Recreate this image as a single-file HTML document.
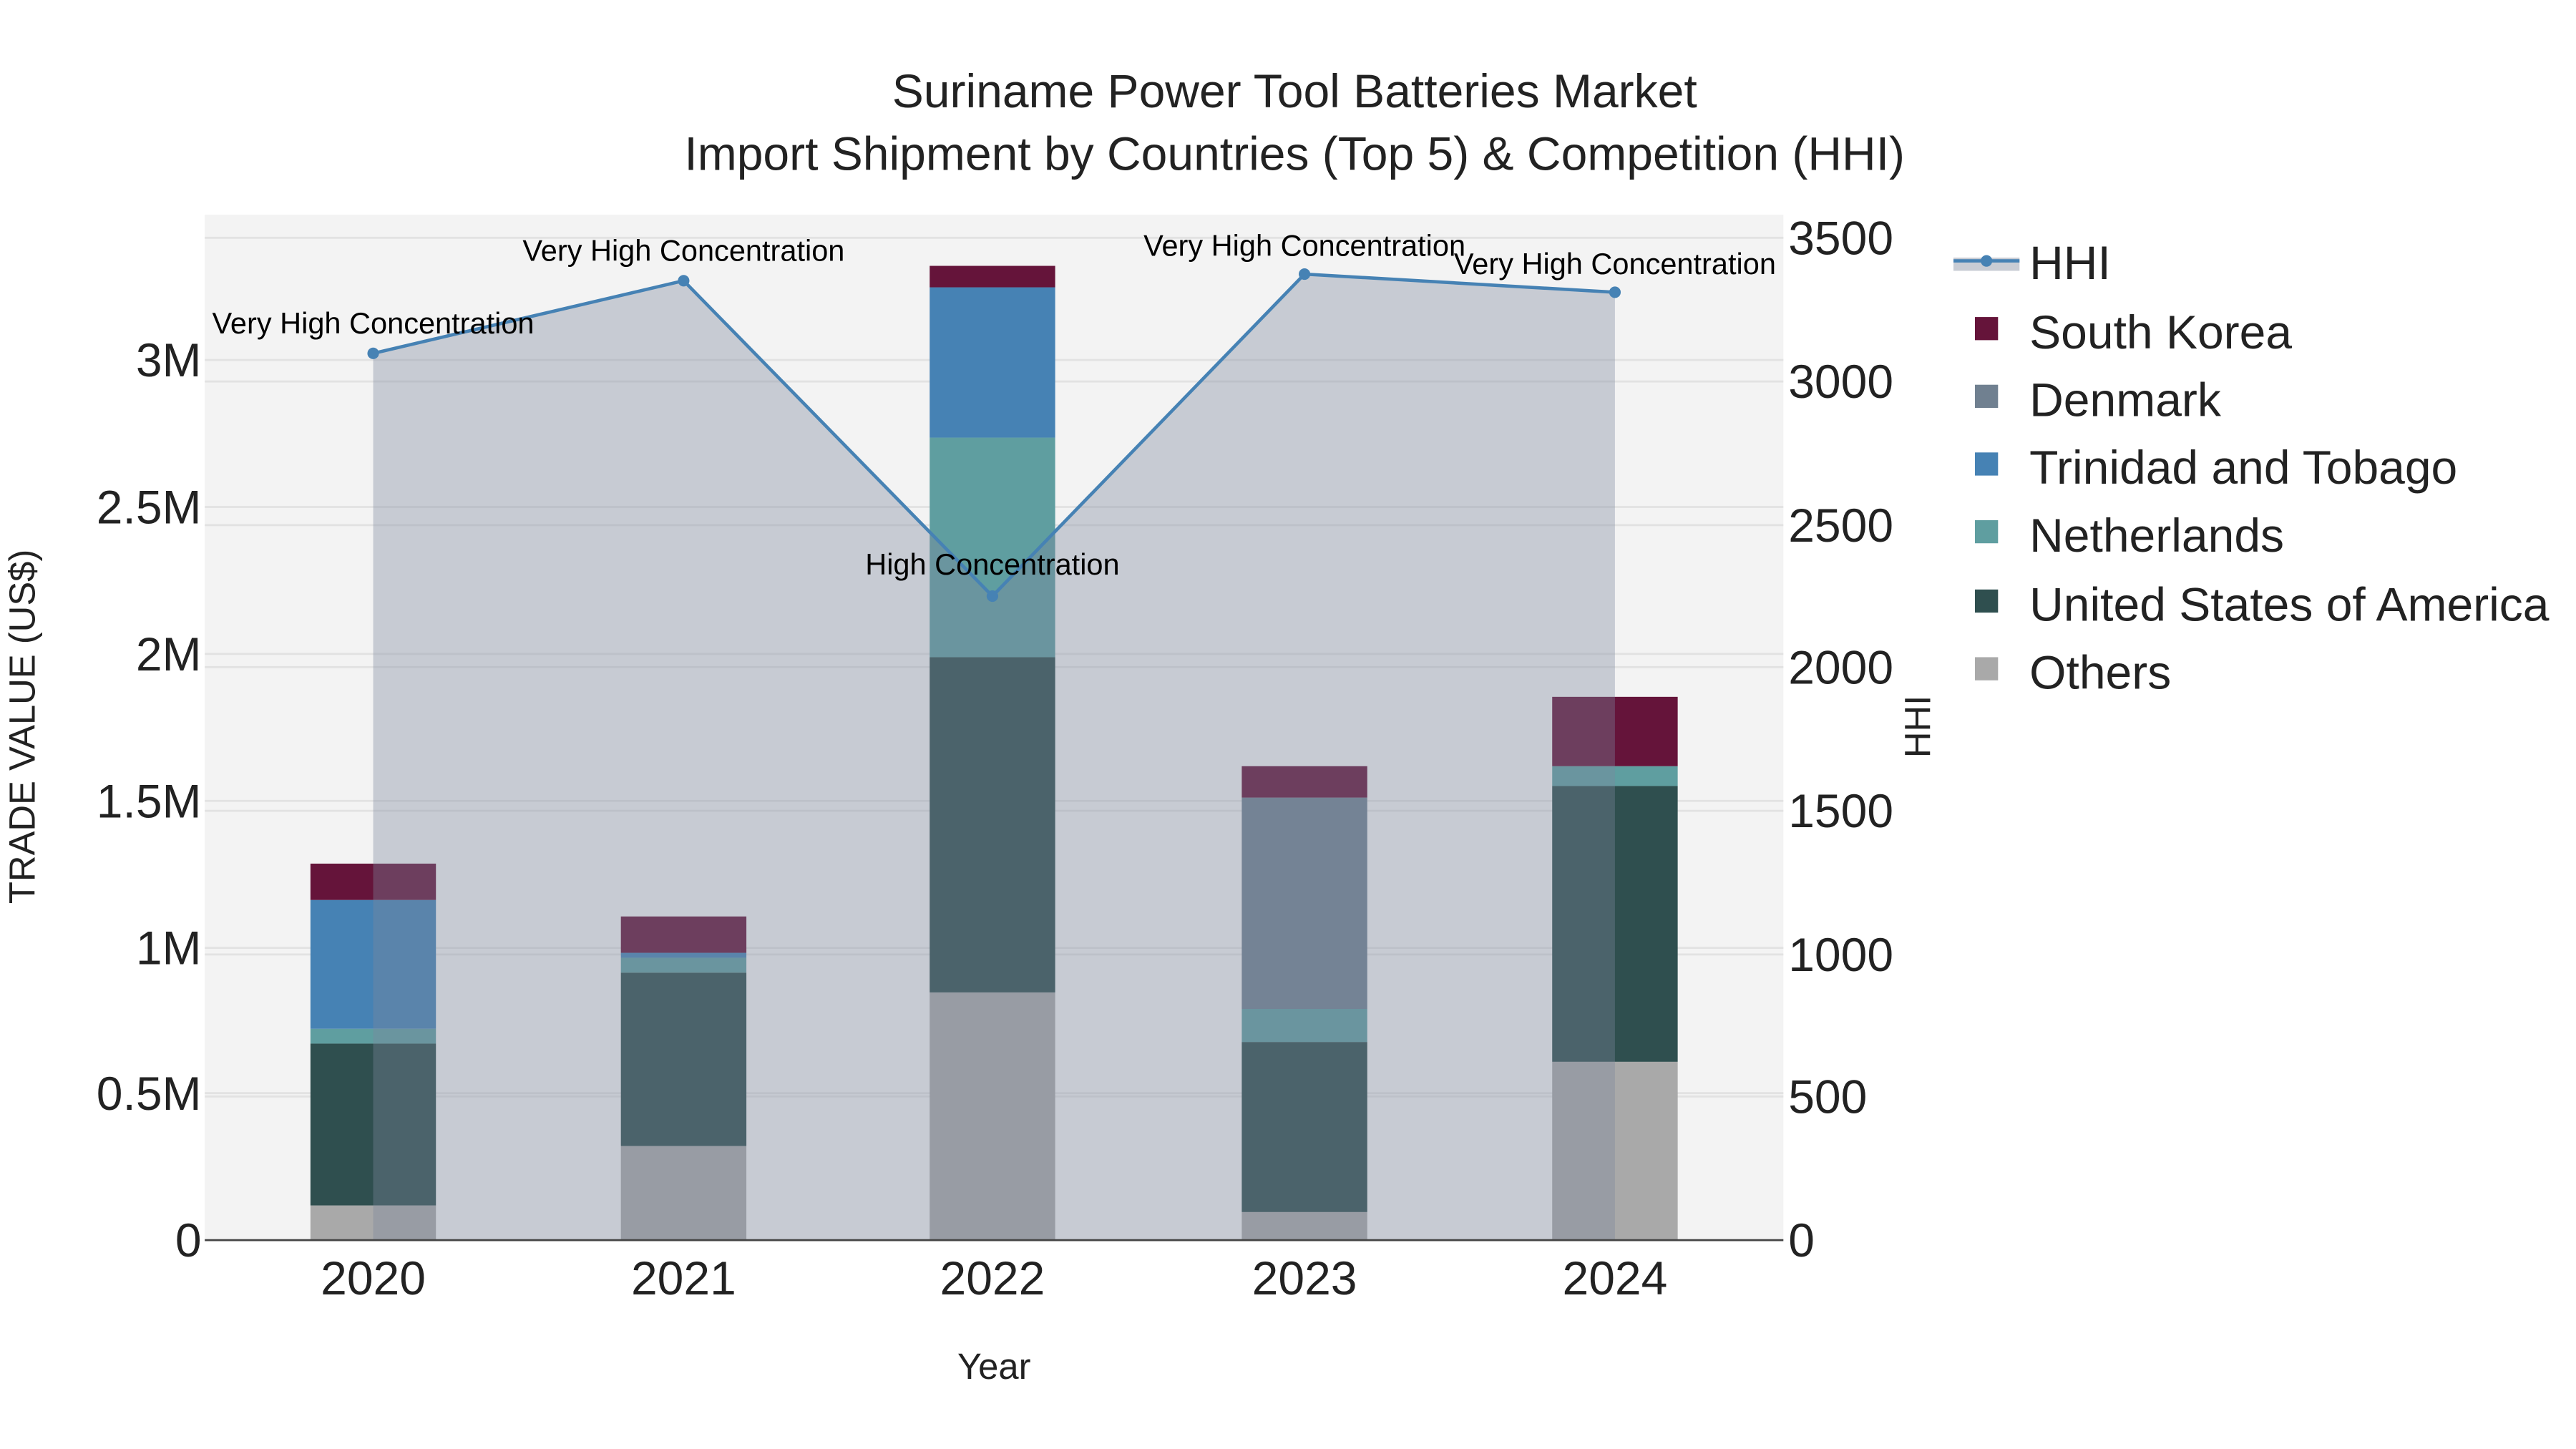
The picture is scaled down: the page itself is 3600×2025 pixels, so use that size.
<!DOCTYPE html>
<html><head><meta charset="utf-8"><style>html,body{margin:0;padding:0;background:#fff}svg{display:block}</style></head>
<body>
<svg width="3600" height="2025" viewBox="0 0 1560 877.5" xmlns="http://www.w3.org/2000/svg" font-family="Liberation Sans, sans-serif">
<rect x="0" y="0" width="1560" height="877.5" fill="#fff"/>
<rect x="124" y="130" width="956" height="621" fill="#f3f3f3"/>
<g stroke="#e2e2e2" stroke-width="1.2">
<line x1="124" x2="1080" y1="662" y2="662"/><line x1="124" x2="1080" y1="574" y2="574"/><line x1="124" x2="1080" y1="485" y2="485"/><line x1="124" x2="1080" y1="396" y2="396"/><line x1="124" x2="1080" y1="307" y2="307"/><line x1="124" x2="1080" y1="218" y2="218"/>
<line x1="124" x2="1080" y1="664" y2="664"/><line x1="124" x2="1080" y1="578" y2="578"/><line x1="124" x2="1080" y1="491" y2="491"/><line x1="124" x2="1080" y1="404" y2="404"/><line x1="124" x2="1080" y1="318" y2="318"/><line x1="124" x2="1080" y1="231" y2="231"/><line x1="124" x2="1080" y1="144" y2="144"/>
</g>
<g>
<rect x="188" y="730" width="76" height="21" fill="#a9a9a9"/><rect x="188" y="632" width="76" height="98" fill="#2f4f4f"/><rect x="188" y="623" width="76" height="9" fill="#5f9ea0"/><rect x="188" y="545" width="76" height="78" fill="#4682b4"/><rect x="188" y="523" width="76" height="22" fill="#65143a"/>
<rect x="376" y="694" width="76" height="57" fill="#a9a9a9"/><rect x="376" y="589" width="76" height="105" fill="#2f4f4f"/><rect x="376" y="580" width="76" height="9" fill="#5f9ea0"/><rect x="376" y="577" width="76" height="3" fill="#4682b4"/><rect x="376" y="555" width="76" height="22" fill="#65143a"/>
<rect x="563" y="601" width="76" height="150" fill="#a9a9a9"/><rect x="563" y="398" width="76" height="203" fill="#2f4f4f"/><rect x="563" y="265" width="76" height="133" fill="#5f9ea0"/><rect x="563" y="174" width="76" height="91" fill="#4682b4"/><rect x="563" y="161" width="76" height="13" fill="#65143a"/>
<rect x="752" y="734" width="76" height="17" fill="#a9a9a9"/><rect x="752" y="631" width="76" height="103" fill="#2f4f4f"/><rect x="752" y="611" width="76" height="20" fill="#5f9ea0"/><rect x="752" y="483" width="76" height="128" fill="#708090"/><rect x="752" y="464" width="76" height="19" fill="#65143a"/>
<rect x="940" y="643" width="76" height="108" fill="#a9a9a9"/><rect x="940" y="476" width="76" height="167" fill="#2f4f4f"/><rect x="940" y="464" width="76" height="12" fill="#5f9ea0"/><rect x="940" y="422" width="76" height="42" fill="#65143a"/>
</g>
<polygon points="226,751 226,214 414,170 601,361 790,166 978,177 978,751" fill="rgb(125,136,158)" fill-opacity="0.37"/>
<polyline points="226,214 414,170 601,361 790,166 978,177" fill="none" stroke="#4682b4" stroke-width="2"/>
<g fill="#4682b4"><circle cx="226" cy="214" r="3.5"/><circle cx="414" cy="170" r="3.5"/><circle cx="601" cy="361" r="3.5"/><circle cx="790" cy="166" r="3.5"/><circle cx="978" cy="177" r="3.5"/></g>
<line x1="124" x2="1080" y1="751" y2="751" stroke="#444" stroke-width="1.2"/>
<g font-size="18" fill="#000" text-anchor="middle">
<text x="226" y="202">Very High Concentration</text><text x="414" y="158">Very High Concentration</text><text x="790" y="155">Very High Concentration</text><text x="978" y="166">Very High Concentration</text><text x="601" y="348">High Concentration</text>
</g>
<g font-size="28.6" fill="#222" text-anchor="middle">
<text x="784" y="65">Suriname Power Tool Batteries Market</text>
<text x="784" y="103">Import Shipment by Countries (Top 5) &amp; Competition (HHI)</text>
</g>
<g font-size="28.6" fill="#222" text-anchor="end">
<text x="122" y="761">0</text><text x="122" y="672">0.5M</text><text x="122" y="584">1M</text><text x="122" y="495">1.5M</text><text x="122" y="406">2M</text><text x="122" y="317">2.5M</text><text x="122" y="228">3M</text>
</g>
<g font-size="28.6" fill="#222" text-anchor="start">
<text x="1083" y="761">0</text><text x="1083" y="674">500</text><text x="1083" y="588">1000</text><text x="1083" y="501">1500</text><text x="1083" y="414">2000</text><text x="1083" y="328">2500</text><text x="1083" y="241">3000</text><text x="1083" y="154">3500</text>
</g>
<g font-size="28.6" fill="#222" text-anchor="middle">
<text x="226" y="784">2020</text><text x="414" y="784">2021</text><text x="601" y="784">2022</text><text x="790" y="784">2023</text><text x="978" y="784">2024</text>
</g>
<text x="602" y="835" font-size="22" fill="#222" text-anchor="middle">Year</text>
<text transform="translate(21,440) rotate(-90)" font-size="22" fill="#222" text-anchor="middle">TRADE VALUE (US$)</text>
<text transform="translate(1169,440) rotate(-90)" font-size="22" fill="#222" text-anchor="middle">HHI</text>
<g>
<rect x="1183" y="156" width="40" height="8" fill="#c8ccd4"/><line x1="1183" x2="1223" y1="158" y2="158" stroke="#4682b4" stroke-width="2"/><circle cx="1203" cy="158" r="3.5" fill="#4682b4"/>
<rect x="1196" y="192" width="14" height="14" fill="#65143a"/>
<rect x="1196" y="233" width="14" height="14" fill="#708090"/>
<rect x="1196" y="274" width="14" height="14" fill="#4682b4"/>
<rect x="1196" y="315" width="14" height="14" fill="#5f9ea0"/>
<rect x="1196" y="357" width="14" height="14" fill="#2f4f4f"/>
<rect x="1196" y="398" width="14" height="14" fill="#a9a9a9"/>
</g>
<g font-size="28.6" fill="#222">
<text x="1229" y="169">HHI</text><text x="1229" y="211">South Korea</text><text x="1229" y="252">Denmark</text><text x="1229" y="293">Trinidad and Tobago</text><text x="1229" y="334">Netherlands</text><text x="1229" y="376">United States of America</text><text x="1229" y="417">Others</text>
</g>
</svg>
</body></html>
